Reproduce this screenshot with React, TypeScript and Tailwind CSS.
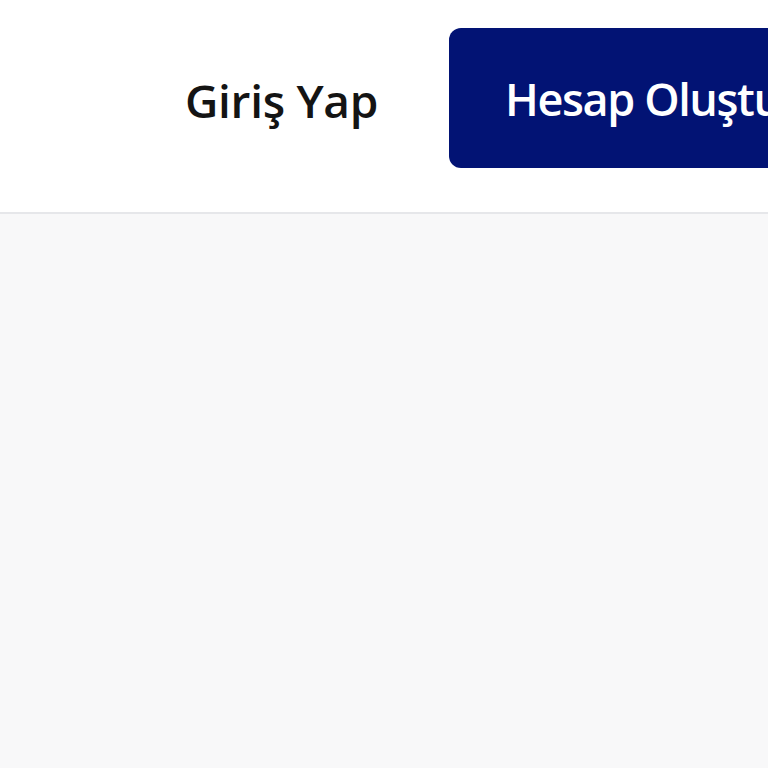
export default function App() {
  return (
    <div className="w-[768px] h-[768px] overflow-hidden bg-[#f8f8f9] font-['Open_Sans',_'Noto_Sans',sans-serif]">
      <header className="h-[214px] bg-white border-b-2 border-[#e6e7ea] flex items-start pt-[28px] whitespace-nowrap">
        <a className="ml-[185px] mt-[49px] text-[46px] font-semibold text-[#141414] leading-none tracking-[-0.3px]">
          Giriş Yap
        </a>
        <button className="ml-[71px] shrink-0 h-[140px] pl-[56px] pr-[56px] rounded-[12px] bg-[#021374] text-white text-[45px] font-semibold leading-none tracking-[-1.4px]">
          Hesap Oluştur
        </button>
      </header>
    </div>
  )
}
